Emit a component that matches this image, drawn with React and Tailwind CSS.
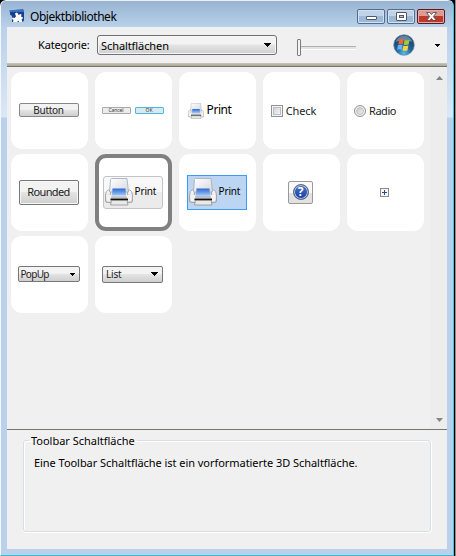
import React from "react";

function Printer({ className }) {
  return (
    <svg viewBox="0 0 28 28" className={className}>
      <defs>
        <linearGradient id="paper" x1="0" y1="0" x2="1" y2="1">
          <stop offset="0" stopColor="#ffffff" />
          <stop offset="1" stopColor="#d3d8df" />
        </linearGradient>
        <linearGradient id="ink" x1="0" y1="0" x2="0" y2="1">
          <stop offset="0" stopColor="#2f66d0" />
          <stop offset="1" stopColor="#9cc8fa" />
        </linearGradient>
        <linearGradient id="body" x1="0" y1="0" x2="0" y2="1">
          <stop offset="0" stopColor="#ffffff" />
          <stop offset="1" stopColor="#c9c9c9" />
        </linearGradient>
      </defs>
      <path d="M3 12h3l-1 7h18l-1-7h3q2 1 2.500 5v6q0 1.500-2 1.500H2.500q-2 0-2-1.500v-6q.5-4 2.500-5z" fill="url(#body)" stroke="#999" strokeWidth=".8" />
      <path d="M1.500 17h5l-.5 3h16l-.5-3h5v4.500q0 2-2 2H3.500q-2 0-2-2z" fill="#f3f3f3" />
      <path d="M5.500 1.500l1-1H22l1.500 13.500H4.500z" fill="url(#paper)" stroke="#a5a9b0" strokeWidth=".8" />
      <path d="M7.500 10.500h13l.5 7H7z" fill="url(#ink)" />
      <path d="M5.500 20.500h17.500v2H5.500z" fill="#111" />
      <path d="M6.500 22.500h15.500l1 4.500H5.500z" fill="#e9e9e9" stroke="#888" strokeWidth=".7" />
    </svg>
  );
}

function Caret({ className }) {
  return (
    <svg viewBox="0 0 8 4" className={className} shapeRendering="crispEdges">
      <path d="M0 0h8L4 4z" fill="#000" />
    </svg>
  );
}

function AppIcon() {
  return (
    <svg viewBox="0 0 16 16" className="h-4 w-4 shrink-0">
      <path d="M0 2L13.500.5l1.500 2v2H1z" fill="#3d70b8" />
      <path d="M0 1.800L13.500.5" stroke="#a5c5ea" />
      <path d="M1 4h14v8l-1 2H3V8L1 6.500z" fill="#173f91" />
      <path d="M6 5.500l1.500-1 1.500 1 .5 1.500 2-1 1 .5-.5 2 2 1-.5 1.500-1 .5 1 2.500H10l-.5-1.500-1.500 1.500H4l.5-2-1.500-1 .5-1.500 2 .5 1.500-1.500z" fill="#fff" />
    </svg>
  );
}

function WindowsOrb() {
  return (
    <svg viewBox="0 0 22 22" className="h-[22px] w-[22px]">
      <defs>
        <radialGradient id="orb" cx=".5" cy=".9" r=".85">
          <stop offset="0" stopColor="#4bc0ec" />
          <stop offset=".4" stopColor="#23679f" />
          <stop offset="1" stopColor="#1c3559" />
        </radialGradient>
      </defs>
      <circle cx="11" cy="11" r="10.300" fill="url(#orb)" stroke="#6d8eae" strokeWidth=".7" />
      <path d="M2.500 8Q5 1.500 11 1.500T19.500 8Q11 4.500 2.500 8z" fill="#9fbcd6" opacity=".55" />
      <path d="M6.300 5.500q2.200-1.300 4.500-.2l-.9 4.800q-2.300-1-4.600.2z" fill="#ee6636" />
      <path d="M11.600 5.700q2.400 1.100 5 .1l-1 4.800q-2.500 1-4.900-.1z" fill="#9ccb3d" />
      <path d="M5 11.200q2.300-1.200 4.600-.1l-.9 4.800q-2.300-1.100-4.700.1z" fill="#69b1ef" />
      <path d="M10.400 11.500q2.400 1.100 5 .1l-1 4.800q-2.500 1-5-.1z" fill="#ffd23d" />
    </svg>
  );
}

function Caption({ kind }) {
  const close = kind === "close";
  return (
    <div
      className={
        close
          ? "flex h-[15px] w-7 items-center justify-center rounded-[2px] border border-[#5a1a20] bg-linear-to-b from-[#dc9b91] from-50% to-[#bc3a29] to-50% shadow-[inset_0_0_0_1px_#e5aaa2]"
          : "flex h-[15px] w-7 items-center justify-center rounded-[2px] border border-[#566b87] bg-linear-to-b from-[#bfd3e9] from-50% to-[#9db9d8] to-50% shadow-[inset_0_0_0_1px_#d0e1f3]"
      }
    >
      <svg viewBox="0 0 13 11" className="h-[11px] w-[13px]">
        {kind === "min" && <rect x="1.500" y="5.500" width="10" height="3" rx=".5" fill="#fff" stroke="#535666" />}
        {kind === "max" && (
          <g fill="#fff" stroke="#535666">
            <rect x="1.500" y="1.500" width="10" height="8" rx=".5" />
            <rect x="4.500" y="4.500" width="4" height="2" fill="#b5cbe3" />
          </g>
        )}
        {close && (
          <path d="M1.500 1.500h3.300l1.700 2 1.700-2h3.300L8.400 5.500l3.100 4H8.200l-1.700-2-1.700 2H1.500l3.100-4z" fill="#fff" stroke="#5d4650" strokeWidth=".9" />
        )}
      </svg>
    </div>
  );
}

function Tile({ selected, children }) {
  return (
    <div
      className={
        selected
          ? "flex h-[77px] w-[77px] items-center justify-center rounded-[11px] border-4 border-[#808080] bg-white pr-px"
          : "flex h-[77px] w-[77px] items-center justify-center rounded-[11px] bg-white pr-px"
      }
    >
      {children}
    </div>
  );
}

const face = "bg-linear-to-b from-[#f3f3f3] from-45% via-[#e4e4e4] via-50% to-[#cfcfcf]";

export default function App() {
  return (
    <div className="h-[556px] w-[456px] bg-[#8c8c8c] pr-px font-['Noto_Sans','Open_Sans',sans-serif] text-[11px] leading-none text-black">
      <div className="h-[556px] bg-black pr-px">
        <div className="flex h-[556px] flex-col overflow-hidden rounded-t-[6px] border-t border-r border-b border-l border-t-[#e9f1f8] border-r-[#43c3e0] border-b-[#36bddc] border-l-[#f4f8fc] bg-linear-to-b from-[#b9d1ea] from-[26px] via-[#dbe8f6] via-[116px] to-[#b9d1ea] to-[117px] px-[6px] pb-[6px]">
          <div className="-mx-[6px] flex h-[26px] shrink-0 items-start bg-linear-to-b from-[#98b4d1] to-[#b9d1ea] pr-[8px] pl-[8px]">
            <div className="pt-[7px]"><AppIcon /></div>
            <h1 className="grow pt-[10px] pl-[5px] text-[12px] tracking-[-0.45px] whitespace-nowrap">Objektbibliothek</h1>
            <div className="flex gap-[2px] pt-[8px]">
              <Caption kind="min" />
              <Caption kind="max" />
              <Caption kind="close" />
            </div>
          </div>

          <div className="flex min-h-0 grow flex-col bg-[#f0f0f0]">
            <div className="flex h-[36px] shrink-0 items-center pl-[31px]">
              <span className="w-[59px] pb-px tracking-[-0.15px]">Kategorie:</span>
              <div className={`flex h-5 w-[180px] items-center justify-between rounded-[3px] border border-[#707070] pr-[5px] pl-[3px] shadow-[inset_0_0_0_1px_#f7f7f7] ${face}`}>
                <span className="tracking-[-0.08px]">Schaltflächen</span>
                <Caret className="h-1 w-[7px]" />
              </div>
              <div className="ml-5 flex items-center pt-[6px]">
                <div className="-mt-[2px] h-[17px] w-[4px] rounded-[1px] border border-[#7b7b7b] bg-[#f5f5f5]" />
                <div className="h-1 w-[55px] border-t border-b border-t-[#b0b0b0] border-b-white bg-[#e4e4e4]" />
              </div>
              <div className="ml-[37px]"><WindowsOrb /></div>
              <Caret className="ml-[20px] h-[3px] w-[5px]" />
            </div>
            <div className="h-[4px] shrink-0 border-b border-[#77766e] bg-linear-to-b from-[#c9c6ba] to-[#aaa698]" />

            <div className="flex h-[362px] shrink-0">
              <div className="grid grow auto-rows-[77px] grid-cols-[repeat(5,77px)] content-start gap-x-[7px] gap-y-[5px] pt-[4.5px] pl-[3.5px]">
                <Tile>
                  <div className={`flex h-[14px] w-[60px] items-center justify-center rounded-[2px] border border-[#888] text-[10px] tracking-[-0.3px] text-[#222] ${face}`}>Button</div>
                </Tile>
                <Tile>
                  <div className="flex gap-[4px] text-[5px] tracking-[-0.1px] text-[#333]">
                    <div className="flex h-[7px] w-[29px] items-center justify-center rounded-[1px] border border-[#aaa] bg-[#ececec]">Cancel</div>
                    <div className="flex h-[7px] w-[29px] items-center justify-center rounded-[1px] border border-[#4db8e0] bg-[#d9e9f0]">OK</div>
                  </div>
                </Tile>
                <Tile>
                  <div className="mr-[14px] flex items-center gap-[3px]">
                    <Printer className="mt-[2px] h-4 w-4" />
                    <span className="text-[12px] tracking-[-0.45px]">Print</span>
                  </div>
                </Tile>
                <Tile>
                  <div className="mr-[14px] flex items-center gap-[3px]">
                    <div className="mt-[2px] h-3 w-3 border border-[#929292] bg-[#f4f4f4] p-px">
                      <div className="h-2 w-2 border border-[#bbbfc5] bg-linear-to-br from-[#cfd2d6] to-[#f5f5f5]" />
                    </div>
                    <span className="tracking-[-0.1px] text-[#222]">Check</span>
                  </div>
                </Tile>
                <Tile>
                  <div className="mr-[19px] flex items-center gap-[3px]">
                    <div className="mt-[2px] h-3 w-3 rounded-full border border-[#929292] bg-[#f4f4f4] p-px">
                      <div className="h-2 w-2 rounded-full border border-[#c0c0c0] bg-linear-to-br from-[#c8c8c8] to-[#f0f0f0]" />
                    </div>
                    <span className="tracking-[-0.5px] text-[#222]">Radio</span>
                  </div>
                </Tile>

                <Tile>
                  <div className={`flex h-[25px] w-[60px] items-center justify-center rounded-[2px] border border-[#777] pb-px tracking-[-0.65px] text-[#222] shadow-[inset_0_0_0_1px_#f7f7f7] ${face}`}>Rounded</div>
                </Tile>
                <Tile selected>
                  <div className="flex h-[33px] w-[60px] shrink-0 items-center gap-[2px] rounded-[3px] border border-[#c4c4c4] bg-linear-to-b from-[#f8f8f8] from-50% to-[#ebebeb] to-50% pl-px">
                    <Printer className="h-7 w-7 shrink-0" />
                    <span className="pb-[2px] text-[10px] tracking-[-0.15px]">Print</span>
                  </div>
                </Tile>
                <Tile>
                  <div className="flex h-[35px] w-[60px] items-center gap-[2px] border border-[#3d9bf5] bg-[#bbd5f2] pl-px">
                    <Printer className="h-7 w-7 shrink-0" />
                    <span className="pb-[2px] text-[10px] tracking-[-0.15px]">Print</span>
                  </div>
                </Tile>
                <Tile>
                  <div className="flex h-[23px] w-[25px] items-center justify-center rounded-[2px] border border-[#999] bg-linear-to-b from-[#fafafa] from-50% to-[#e2e2e2] to-50%">
                    <div className="flex h-4 w-4 items-center justify-center rounded-full border border-[#5c6475] bg-linear-to-b from-[#4c72c9] to-[#153da6] text-[12px] font-bold text-white shadow-[inset_0_0_0_1px_#b7c5e2]">?</div>
                  </div>
                </Tile>
                <Tile>
                  <div className="pr-px">
                    <svg viewBox="0 0 9 9" className="h-[9px] w-[9px]" shapeRendering="crispEdges">
                      <rect x=".5" y=".5" width="8" height="8" fill="#f6f6f6" stroke="#8a8a8a" />
                      <path d="M2 4.500h5M4.500 2v5" stroke="#2d4a9a" />
                    </svg>
                  </div>
                </Tile>

                <Tile>
                  <div className={`flex h-4 w-[62px] items-center justify-between rounded-[2px] border border-[#777] pr-[4px] pl-[2px] text-[10px] text-[#222] ${face}`}>
                    <span className="tracking-[-0.7px]">PopUp</span>
                    <Caret className="h-[3px] w-[6px]" />
                  </div>
                </Tile>
                <Tile>
                  <div className={`flex h-[17px] w-[61px] items-center justify-between rounded-[2px] border border-[#777] pr-[4px] pl-[3px] text-[10px] text-[#222] ${face}`}>
                    <span className="tracking-[-0.2px]">List</span>
                    <Caret className="h-[4px] w-[7px]" />
                  </div>
                </Tile>
              </div>
              <div className="flex w-[17px] shrink-0 flex-col items-center justify-between bg-[#ededed] pt-[9px] pb-[7px]">
                <svg viewBox="0 0 8 4" className="h-1 w-2"><path d="M1 4h7L4.500 0z" fill="#858585" /></svg>
                <svg viewBox="0 0 8 4" className="h-1 w-2"><path d="M1 0h7L4.500 4z" fill="#858585" /></svg>
              </div>
            </div>

            <div className="grow border-t border-[#77766e] px-4 pt-[4px]">
              <fieldset className="h-[98px] rounded-[3px] border border-[#d5dfe5] pl-[10px] shadow-[inset_1px_1px_0_#fff,0_1px_0_#fff,1px_0_0_#fff]">
                <legend className="-ml-[5px] px-[2px] leading-[13px] tracking-[-0.02px]">Toolbar Schaltfläche</legend>
                <p className="pt-[10px] tracking-[-0.045px] whitespace-nowrap">Eine Toolbar Schaltfläche ist ein vorformatierte 3D Schaltfläche.</p>
              </fieldset>
            </div>
          </div>
        </div>
      </div>
    </div>
  );
}
